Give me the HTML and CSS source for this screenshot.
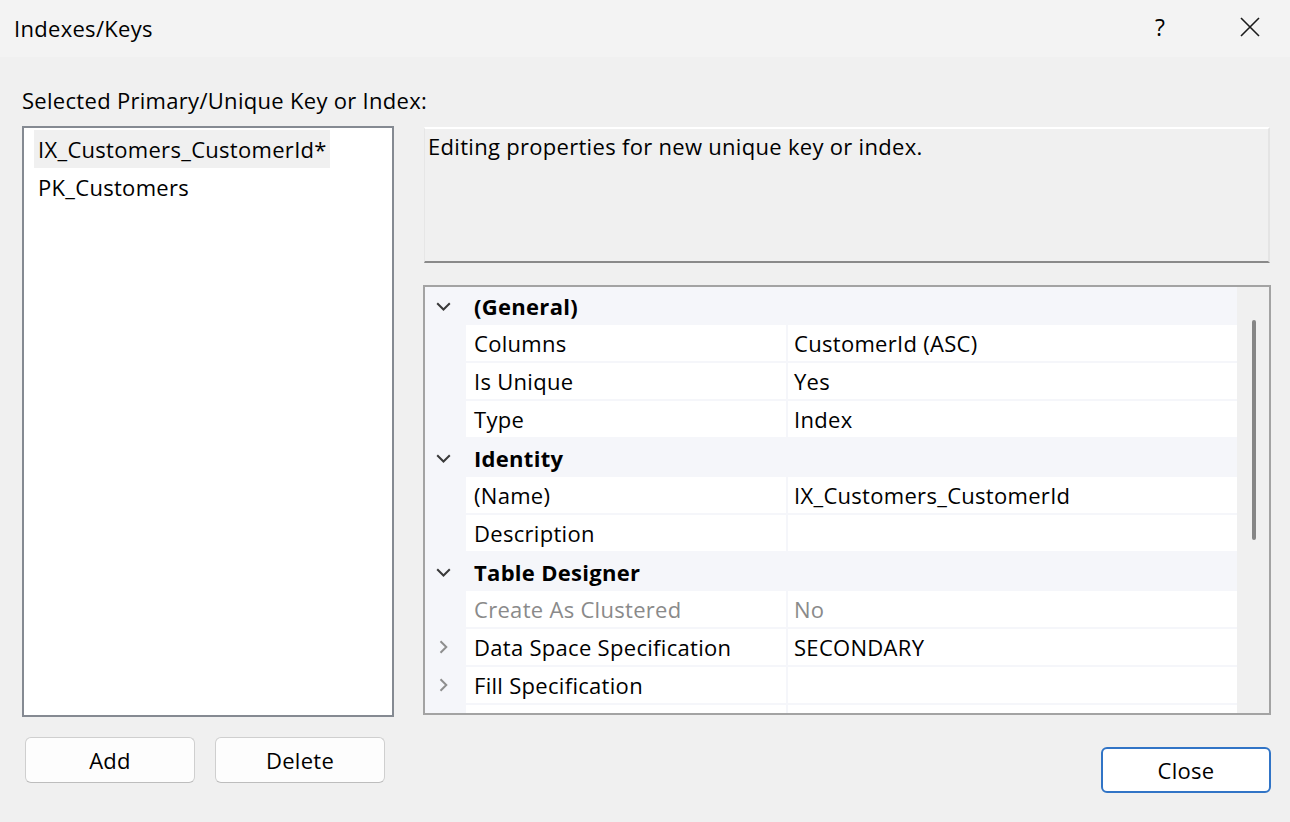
FILE: index.html
```html
<!DOCTYPE html>
<html>
<head>
<meta charset="utf-8">
<link rel="stylesheet" href="styles.css">
</head>
<body>
<div class="titlebar">
  <span class="title">Indexes/Keys</span>
  <span class="help">?</span>
  <span class="closex"><svg width="20" height="20" viewBox="0 0 20 20"><path d="M1 1 L19 19 M19 1 L1 19" stroke="#1a1a1a" stroke-width="1.6" fill="none"/></svg></span>
</div>
<div class="content">
  <div class="leftcol">
    <div class="label">Selected Primary/Unique Key or Index:</div>
    <div class="listbox">
      <div class="item selected">IX_Customers_CustomerId*</div>
      <div class="item">PK_Customers</div>
    </div>
    <div class="btnrow">
      <button class="btn">Add</button>
      <button class="btn">Delete</button>
    </div>
  </div>
  <div class="rightcol">
    <div class="desc">Editing properties for new unique key or index.</div>
    <div class="grid">
      <div class="rows">
        <div class="cat"><span class="gut"><svg width="15" height="9" viewBox="0 0 15 9"><path d="M1.2 1.2 L7.5 7.5 L13.8 1.2" stroke="#3a3a3a" stroke-width="2" fill="none"/></svg></span><span class="catname">(General)</span></div>
        <div class="prop"><span class="gut"></span><span class="pname">Columns</span><span class="pval">CustomerId (ASC)</span></div>
        <div class="prop"><span class="gut"></span><span class="pname">Is Unique</span><span class="pval">Yes</span></div>
        <div class="prop"><span class="gut"></span><span class="pname">Type</span><span class="pval">Index</span></div>
        <div class="cat"><span class="gut"><svg width="15" height="9" viewBox="0 0 15 9"><path d="M1.2 1.2 L7.5 7.5 L13.8 1.2" stroke="#3a3a3a" stroke-width="2" fill="none"/></svg></span><span class="catname">Identity</span></div>
        <div class="prop"><span class="gut"></span><span class="pname">(Name)</span><span class="pval">IX_Customers_CustomerId</span></div>
        <div class="prop"><span class="gut"></span><span class="pname">Description</span><span class="pval"></span></div>
        <div class="cat"><span class="gut"><svg width="15" height="9" viewBox="0 0 15 9"><path d="M1.2 1.2 L7.5 7.5 L13.8 1.2" stroke="#3a3a3a" stroke-width="2" fill="none"/></svg></span><span class="catname">Table Designer</span></div>
        <div class="prop disabled"><span class="gut"></span><span class="pname">Create As Clustered</span><span class="pval">No</span></div>
        <div class="prop"><span class="gut"><svg width="9" height="14" viewBox="0 0 9 14"><path d="M1.5 1.2 L7.3 7 L1.5 12.8" stroke="#8f8f8f" stroke-width="2" fill="none"/></svg></span><span class="pname">Data Space Specification</span><span class="pval">SECONDARY</span></div>
        <div class="prop"><span class="gut"><svg width="9" height="14" viewBox="0 0 9 14"><path d="M1.5 1.2 L7.3 7 L1.5 12.8" stroke="#8f8f8f" stroke-width="2" fill="none"/></svg></span><span class="pname">Fill Specification</span><span class="pval"></span></div>
        <div class="prop"><span class="gut"></span><span class="pname"></span><span class="pval"></span></div>
      </div>
      <div class="scroll"><div class="thumb"></div></div>
    </div>
    <div class="closerow"><button class="btn primary">Close</button></div>
  </div>
</div>
</body>
</html>
```
FILE: styles.css
```css
* { box-sizing: border-box; }
html, body { margin: 0; padding: 0; }
body {
  width: 1290px;
  height: 822px;
  overflow: hidden;
  background: #f0f0f0;
  font-family: "Open Sans", "Noto Sans", sans-serif;
  font-size: 22px;
  letter-spacing: 0.3px;
  color: #000;
}
.titlebar {
  height: 57px;
  background: #f3f3f3;
  display: flex;
  align-items: center;
  padding-left: 14px;
}
.title { flex: 1; font-size: 22px; margin-top: -2px; }
.help { font-size: 23px; width: 20px; text-align: center; margin-right: 70px; margin-top: -4px; }
.closex { width: 20px; height: 20px; margin-right: 30px; margin-top: -4px; display: flex; }
.content { display: flex; padding-left: 22px; }
.leftcol { width: 372px; display: flex; flex-direction: column; }
.label { margin-top: 29px; height: 28px; line-height: 28px; white-space: nowrap; }
.listbox {
  margin-top: 12px;
  height: 591px;
  background: #fff;
  border: 2px solid #858a92;
  padding: 2px 10px;
}
.item { height: 38px; line-height: 38px; padding-left: 4px; white-space: nowrap; }
.item.selected { background: #f0f0f0; width: 296px; }
.btnrow { display: flex; gap: 20px; margin-top: 20px; padding-left: 3px; }
.btn {
  width: 170px;
  height: 46px;
  font-family: inherit;
  font-size: 22px;
  letter-spacing: 0.3px;
  color: #000;
  background: #fdfdfd;
  border: 1px solid #cfcfcf;
  border-bottom-color: #bdbdbd;
  border-radius: 6px;
  padding: 0;
}
.rightcol { width: 848px; margin-left: 29px; padding-top: 70px; display: flex; flex-direction: column; }
.desc {
  margin: 0 1px;
  height: 136px;
  background: #f0f0f0;
  border-top: 2px solid #ffffff;
  border-left: 1px solid #e6e6e6;
  border-right: 2px solid #e4e4e4;
  border-bottom: 2px solid #8a8a8a;
  padding: 3px 3px;
  line-height: 28px;
}
.grid {
  margin-top: 22px;
  height: 430px;
  border: 2px solid #a3a3a3;
  display: flex;
  background: #f0f0f0;
}
.rows { width: 812px; background: #f5f6fa; overflow: hidden; }
.cat { height: 38px; display: flex; align-items: center; font-weight: 700; }
.prop { height: 36px; margin-bottom: 2px; display: flex; align-items: center; white-space: nowrap; }
.gut { width: 41px; height: 100%; display: flex; align-items: center; justify-content: center; flex: none; padding-right: 5px; }
.catname { padding-left: 8px; }
.pname { width: 320px; height: 100%; background: #fff; padding-left: 8px; display: flex; align-items: center; flex: none; }
.pval { flex: 1; height: 100%; background: #fff; margin-left: 2px; padding-left: 6px; display: flex; align-items: center; }
.prop.disabled { color: #8a8a8a; }
.scroll { flex: 1; position: relative; background: #f0f0f0; }
.thumb { position: absolute; left: 15px; top: 33px; width: 4px; height: 220px; background: #868686; border-radius: 2px; }
.closerow { display: flex; justify-content: flex-end; margin-top: 32px; }
.btn.primary { border: 2px solid #3174c6; background: #fff; }
```
